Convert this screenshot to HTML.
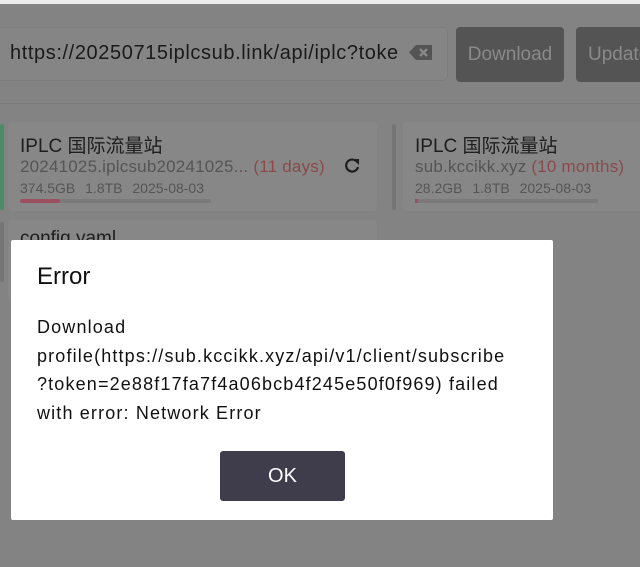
<!DOCTYPE html>
<html><head><meta charset="utf-8"><style>
*{margin:0;padding:0;box-sizing:border-box}
body{width:640px;height:567px;overflow:hidden;background:#838383;font-family:"Liberation Sans","Noto Sans CJK SC",sans-serif;position:relative}
.a{position:absolute}
.card{background:#878787;border-radius:4px}
</style></head><body>
<div class="a" style="left:0;top:0;width:640px;height:4px;background:#ececec"></div>
<div class="a" style="left:-10px;top:27px;width:458px;height:54px;border:1px solid #7c7c7c;border-radius:5px;background:#858585"></div>
<div class="a" style="left:10px;top:42px;font-size:20px;letter-spacing:0.6px;color:#1a1a1a;white-space:nowrap;width:388px;overflow:hidden">https://20250715iplcsub.link/api/iplc?token</div>
<svg class="a" style="left:409px;top:44px" width="24" height="17" viewBox="0 0 24 17"><path d="M0 8.5L7 1H23V16H7Z" fill="#545454"/><path d="M11 5L18 12M18 5L11 12" stroke="#888" stroke-width="2.4"/></svg>
<div class="a" style="left:456px;top:27px;width:108px;height:55px;background:#545454;border-radius:4px;color:#8a8a8a;font-size:19px;line-height:55px;text-align:center">Download</div>
<div class="a" style="left:576px;top:27px;width:80px;height:55px;background:#545454;border-radius:4px;color:#8a8a8a;font-size:19px;line-height:55px;padding-left:12px;white-space:nowrap">Update</div>
<div class="a" style="left:0;top:103px;width:640px;height:1px;background:#7a7a7a"></div>
<div class="a" style="left:0;top:124px;width:4px;height:86px;background:#4d8a68;border-radius:2px"></div>
<div class="a card" style="left:8px;top:122px;width:369px;height:89px"></div>
<div class="a" style="left:20px;top:131px;font-size:19px;color:#1e1e1e">IPLC 国际流量站</div>
<div class="a" style="left:20px;top:157px;font-size:17px;letter-spacing:0.2px;color:#555;white-space:nowrap">20241025.iplcsub20241025... <span style="color:#8a4a4a">(11 days)</span></div>
<svg class="a" style="left:343px;top:157px" width="18" height="18" viewBox="0 0 18 18"><path d="M14 5A6 6 0 1 0 15 10" fill="none" stroke="#1e1e1e" stroke-width="2.2"/><path d="M10 2L16 2L16 8Z" fill="#1e1e1e"/></svg>
<div class="a" style="left:20px;top:180px;font-size:14px;color:#555;white-space:nowrap;word-spacing:6px">374.5GB 1.8TB 2025-08-03</div>
<div class="a" style="left:20px;top:199px;width:191px;height:4px;background:#7a7a7a;border-radius:2px"></div>
<div class="a" style="left:20px;top:199px;width:40px;height:4px;background:#9a5060;border-radius:2px"></div>
<div class="a" style="left:392px;top:124px;width:4px;height:86px;background:#757575;border-radius:2px"></div>
<div class="a card" style="left:403px;top:122px;width:260px;height:89px"></div>
<div class="a" style="left:415px;top:131px;font-size:19px;color:#1e1e1e">IPLC 国际流量站</div>
<div class="a" style="left:415px;top:157px;font-size:17px;letter-spacing:0.2px;color:#555;white-space:nowrap">sub.kccikk.xyz <span style="color:#8a4a4a">(10 months)</span></div>
<div class="a" style="left:415px;top:180px;font-size:14px;color:#555;white-space:nowrap;word-spacing:6px">28.2GB 1.8TB 2025-08-03</div>
<div class="a" style="left:415px;top:199px;width:183px;height:4px;background:#7a7a7a;border-radius:2px"></div>
<div class="a" style="left:415px;top:199px;width:3px;height:4px;background:#9a5060"></div>
<div class="a" style="left:0;top:222px;width:4px;height:60px;background:#757575;border-radius:2px"></div>
<div class="a card" style="left:8px;top:220px;width:369px;height:80px"></div>
<div class="a" style="left:20px;top:228px;font-size:19px;color:#1e1e1e">config.yaml</div>
<div class="a" style="left:11px;top:240px;width:542px;height:280px;background:#fff;border-radius:2px"></div>
<div class="a" style="left:37px;top:263px;font-size:24px;color:#111">Error</div>
<div class="a" style="left:37px;top:313px;width:510px;font-size:18px;letter-spacing:1.15px;line-height:28.5px;color:#111;white-space:nowrap">Download<br>profile(https://sub.kccikk.xyz/api/v1/client/subscribe<br>?token=2e88f17fa7f4a06bcb4f245e50f0f969) failed<br>with error: Network Error</div>
<div class="a" style="left:220px;top:451px;width:125px;height:50px;background:#3f3c4c;border-radius:3px;color:#fff;font-size:20px;line-height:50px;text-align:center">OK</div>
</body></html>
